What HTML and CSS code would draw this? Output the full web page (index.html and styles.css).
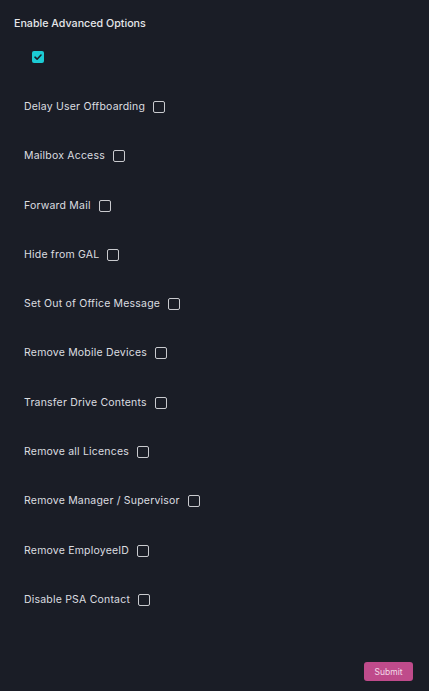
FILE: index.html
```html
<!DOCTYPE html>
<html>
<head>
<meta charset="utf-8">
<link rel="stylesheet" href="styles.css">
</head>
<body>
<div class="page">
  <div class="title">Enable Advanced Options</div>
  <div class="main-check"><span class="box checked"><svg viewBox="0 0 12 12" width="12" height="12"><path d="M3 6.2 L5.1 8.2 L9 4" fill="none" stroke="#1a1d26" stroke-width="1.6" stroke-linecap="round" stroke-linejoin="round"/></svg></span></div>
  <div class="options">
    <div class="row"><span class="label">Delay User Offboarding</span><span class="box"></span></div>
    <div class="row"><span class="label">Mailbox Access</span><span class="box"></span></div>
    <div class="row"><span class="label">Forward Mail</span><span class="box"></span></div>
    <div class="row"><span class="label">Hide from GAL</span><span class="box"></span></div>
    <div class="row"><span class="label">Set Out of Office Message</span><span class="box"></span></div>
    <div class="row"><span class="label">Remove Mobile Devices</span><span class="box"></span></div>
    <div class="row"><span class="label">Transfer Drive Contents</span><span class="box"></span></div>
    <div class="row"><span class="label">Remove all Licences</span><span class="box"></span></div>
    <div class="row"><span class="label">Remove Manager / Supervisor</span><span class="box"></span></div>
    <div class="row"><span class="label">Remove EmployeeID</span><span class="box"></span></div>
    <div class="row"><span class="label">Disable PSA Contact</span><span class="box"></span></div>
  </div>
  <div class="actions"><button class="submit">Submit</button></div>
</div>
</body>
</html>
```
FILE: styles.css
```css
html, body {
  margin: 0;
  padding: 0;
  background: #1a1d26;
  height: 100%;
}
body {
  font-family: "Inter", "Liberation Sans", sans-serif;
  color: #e6e7ea;
}
.page {
  height: 691px;
  box-sizing: border-box;
  padding: 17px 16px 0 14px;
  display: flex;
  flex-direction: column;
}
.title {
  font-size: 10.7px;
  font-weight: 500;
  line-height: 14px;
}
.main-check {
  padding: 20px 0 0 18px;
  height: 12px;
  display: flex;
}
.box {
  width: 12px;
  height: 12px;
  box-sizing: border-box;
  border: 1.5px solid #c9cace;
  border-radius: 2px;
  display: inline-block;
  flex: none;
}
.box.checked {
  background: #1ccbd4;
  border: none;
  display: flex;
}
.options {
  padding: 37px 0 0 10px;
  display: flex;
  flex-direction: column;
  gap: 35.3px;
}
.row {
  display: flex;
  align-items: center;
  gap: 8px;
  height: 14px;
}
.label {
  font-size: 10.5px;
  line-height: 14px;
  letter-spacing: 0.2px;
  color: #dcdde0;
}
.actions {
  margin-top: auto;
  display: flex;
  justify-content: flex-end;
  padding-bottom: 10px;
}
.submit {
  background: #bf4b8b;
  color: #f2dbe8;
  border: none;
  border-radius: 3px;
  font-family: inherit;
  font-size: 8.5px;
  width: 49px;
  height: 19px;
  padding: 0;
}
```
